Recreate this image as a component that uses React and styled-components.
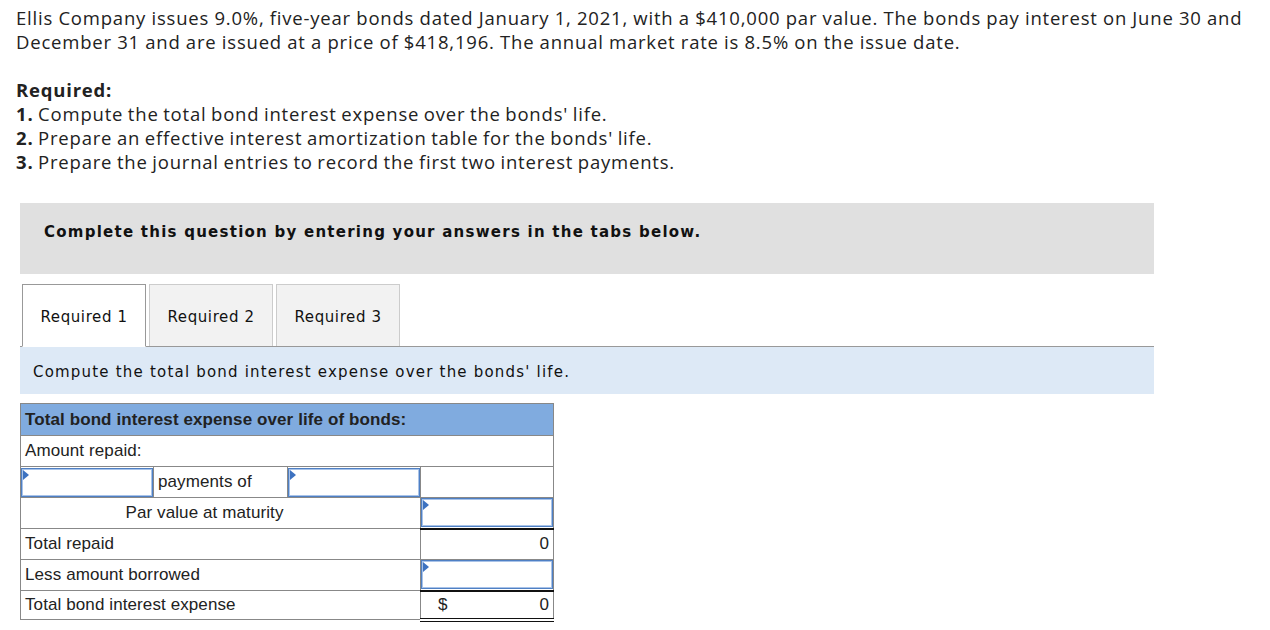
import styled, { createGlobalStyle } from 'styled-components'

const GlobalStyle = createGlobalStyle`
    body {
        margin: 0;
        background: #fff;
        color: #222;
    }
`

const tabs = ['Required 1', 'Required 2', 'Required 3']

const InputBox = () => (
    <Input>
        <Flag />
    </Input>
)

export default function App() {
    return (
        <Page>
            <GlobalStyle />
            <Intro>
                Ellis Company issues 9.0%, five-year bonds dated January 1, 2021, with a $410,000 par value. The bonds pay interest on June 30 and<br />
                December 31 and are issued at a price of $418,196. The annual market rate is 8.5% on the issue date.
            </Intro>
            <Requirements>
                <Strong>Required:</Strong><br />
                <Strong>1.</Strong> Compute the total bond interest expense over the bonds' life.<br />
                <Strong>2.</Strong> Prepare an effective interest amortization table for the bonds' life.<br />
                <Strong>3.</Strong> Prepare the journal entries to record the first two interest payments.
            </Requirements>

            <Notice>Complete this question by entering your answers in the tabs below.</Notice>

            <TabBar>
                {tabs.map((t, i) => (
                    <Tab key={t} $active={i === 0}>{t}</Tab>
                ))}
            </TabBar>
            <Instruction>Compute the total bond interest expense over the bonds' life.</Instruction>

            <Table>
                <colgroup>
                    <col style={{ width: 133 }} />
                    <col style={{ width: 134 }} />
                    <col style={{ width: 133 }} />
                    <col style={{ width: 133 }} />
                </colgroup>
                <tbody>
                    <tr>
                        <HeadCell colSpan={4}>Total bond interest expense over life of bonds:</HeadCell>
                    </tr>
                    <tr>
                        <Cell colSpan={4}>Amount repaid:</Cell>
                    </tr>
                    <tr>
                        <InputCell><InputBox /></InputCell>
                        <Cell>payments of</Cell>
                        <InputCell><InputBox /></InputCell>
                        <Cell />
                    </tr>
                    <tr>
                        <Cell colSpan={3} $center>Par value at maturity</Cell>
                        <InputCell $rule="single"><InputBox /></InputCell>
                    </tr>
                    <tr>
                        <Cell colSpan={3}>Total repaid</Cell>
                        <Cell $right>0</Cell>
                    </tr>
                    <tr>
                        <Cell colSpan={3}>Less amount borrowed</Cell>
                        <InputCell $rule="single"><InputBox /></InputCell>
                    </tr>
                    <tr>
                        <Cell colSpan={3} $short>Total bond interest expense</Cell>
                        <Cell $rule="double" $short>
                            <Money>
                                <span>$</span>
                                <span>0</span>
                            </Money>
                        </Cell>
                    </tr>
                </tbody>
            </Table>
        </Page>
    )
}

const Page = styled.div`
    padding: 6px 16px 20px 16px;
    width: 1270px;
    box-sizing: border-box;
`

const Intro = styled.p`
    margin: 0;
    font-family: "Open Sans", Lato, sans-serif;
    font-size: 18.5px;
    letter-spacing: 0.8px;
    word-spacing: -0.3px;
    line-height: 24px;
    white-space: nowrap;
`

const Requirements = styled.p`
    margin: 24px 0 0 0;
    font-family: "Open Sans", Lato, sans-serif;
    font-size: 18.5px;
    letter-spacing: 0.8px;
    word-spacing: -1px;
    line-height: 24px;
`

const Strong = styled.b`
    font-weight: 700;
`

const Notice = styled.div`
    margin: 29px 0 0 4px;
    width: 1134px;
    height: 71px;
    box-sizing: border-box;
    padding: 18px 24px 0 24px;
    background: #e0e0e0;
    font-family: "DejaVu Sans", Verdana, sans-serif;
    font-weight: 700;
    font-size: 15px;
    letter-spacing: 1.25px;
    line-height: 22px;
    color: #111;
`

const TabBar = styled.div`
    display: flex;
    gap: 3px;
    margin: 10px 0 0 4px;
    padding-left: 2px;
    width: 1132px;
    border-bottom: 1px solid #999;
`

const Tab = styled.div`
    width: 124px;
    box-sizing: border-box;
    display: flex;
    align-items: center;
    justify-content: center;
    padding-top: 2px;
    border: 1px solid ${p => (p.$active ? '#999' : '#ccc')};
    border-bottom: ${p => (p.$active ? '1px solid #fff' : 'none')};
    margin-bottom: ${p => (p.$active ? '-1px' : '0')};
    height: ${p => (p.$active ? '63px' : '62px')};
    background: ${p => (p.$active ? '#fff' : '#f2f2f2')};
    font-family: "DejaVu Sans", Verdana, sans-serif;
    font-size: 15px;
    letter-spacing: 0.6px;
    color: #111;
`

const Instruction = styled.div`
    margin-left: 4px;
    width: 1134px;
    height: 47px;
    box-sizing: border-box;
    padding: 3px 0 0 13px;
    display: flex;
    align-items: center;
    background: #dde9f6;
    font-family: "DejaVu Sans", Verdana, sans-serif;
    font-size: 15px;
    letter-spacing: 1.2px;
    color: #111;
`

const Table = styled.table`
    margin: 9px 0 0 4px;
    width: 534px;
    border-collapse: collapse;
    table-layout: fixed;
    font-family: "Liberation Sans", Arial, sans-serif;
    font-size: 17px;
    letter-spacing: 0.1px;
    color: #222;
`

const Cell = styled.td`
    height: ${p => (p.$short ? '29px' : '31px')};
    padding: 0 4px;
    box-sizing: border-box;
    border: 1px solid #888;
    text-align: ${p => (p.$right ? 'right' : 'left')};
    padding-right: ${p => (p.$center ? '36px' : '4px')};
    ${p => p.$center && 'text-align: center;'}
    ${p => p.$rule === 'double' && `
        border-bottom: 4px double #111;
    `}
`

const HeadCell = styled.td`
    height: 32px;
    padding: 0 4px;
    box-sizing: border-box;
    border: 1px solid #888;
    background: #80abdf;
    font-weight: 700;
`

const InputCell = styled.td`
    height: 31px;
    padding: 0;
    box-sizing: border-box;
    border: 1px solid #888;
    ${p => p.$rule === 'single' && `
        border-bottom: 2px solid #111;
    `}
`

const Input = styled.div`
    position: relative;
    height: 29px;
    box-sizing: border-box;
    border: 2px solid #a9c3e8;
    outline: 1px solid #4f80c4;
    outline-offset: -1px;
    background: #fff;
`

const Flag = styled.span`
    position: absolute;
    left: 0;
    top: 0;
    width: 0;
    height: 0;
    border-top: 5px solid transparent;
    border-bottom: 5px solid transparent;
    border-left: 6px solid #3d72c0;
`

const Money = styled.div`
    display: flex;
    justify-content: space-between;
    padding-left: 13px;
`
